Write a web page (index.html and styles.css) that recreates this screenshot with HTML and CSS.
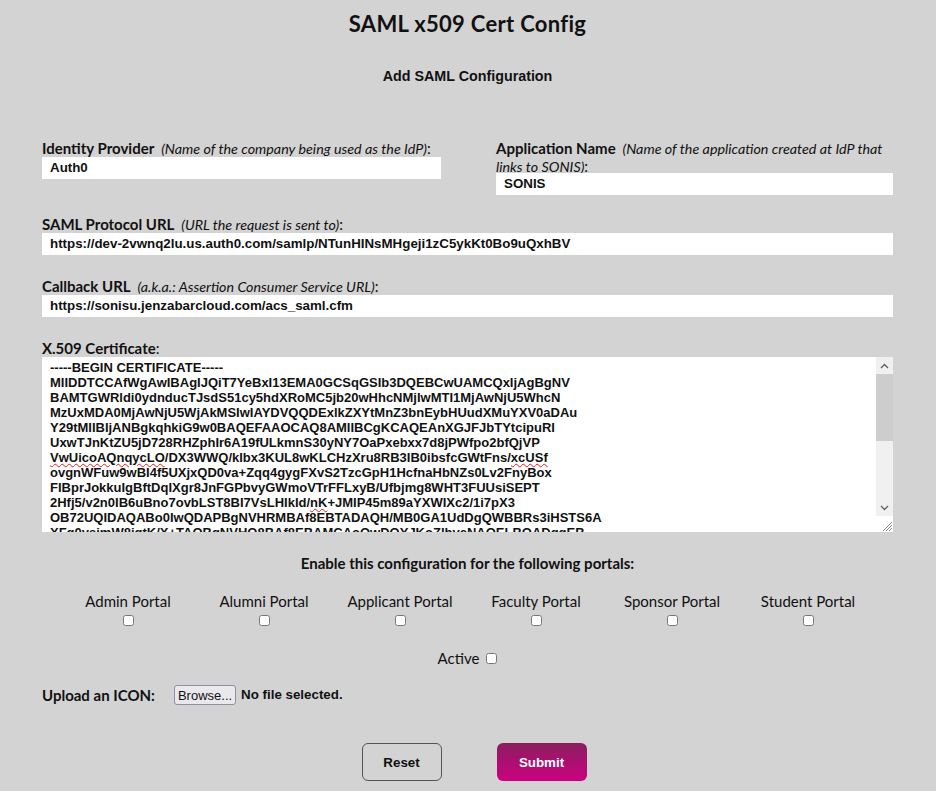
FILE: index.html
```html
<!DOCTYPE html>
<html>
<head>
<meta charset="utf-8">
<link rel="stylesheet" href="styles.css">
</head>
<body>
<div class="page">
  <h1 class="title">SAML x509 Cert Config</h1>
  <h2 class="subtitle">Add SAML Configuration</h2>

  <div class="row-two">
    <div class="field">
      <label class="lbl"><b>Identity Provider</b> <i>(Name of the company being used as the IdP)</i>:</label>
      <div class="input">Auth0</div>
    </div>
    <div class="field">
      <label class="lbl lbl-tight"><b>Application Name</b> <i>(Name of the application created at IdP that links to SONIS)</i>:</label>
      <div class="input">SONIS</div>
    </div>
  </div>

  <div class="field">
    <label class="lbl"><b>SAML Protocol URL</b> <i>(URL the request is sent to)</i>:</label>
    <div class="input">https://dev-2vwnq2lu.us.auth0.com/samlp/NTunHINsMHgeji1zC5ykKt0Bo9uQxhBV</div>
  </div>

  <div class="field">
    <label class="lbl"><b>Callback URL</b> <i>(a.k.a.: Assertion Consumer Service URL)</i>:</label>
    <div class="input">https://sonisu.jenzabarcloud.com/acs_saml.cfm</div>
  </div>

  <div class="field">
    <label class="lbl"><b>X.509 Certificate</b>:</label>
    <div class="textarea">
      <div class="ta-text">-----BEGIN CERTIFICATE-----
MIIDDTCCAfWgAwIBAgIJQiT7YeBxI13EMA0GCSqGSIb3DQEBCwUAMCQxIjAgBgNV
BAMTGWRldi0ydnducTJsdS51cy5hdXRoMC5jb20wHhcNMjIwMTI1MjAwNjU5WhcN
MzUxMDA0MjAwNjU5WjAkMSIwIAYDVQQDExlkZXYtMnZ3bnEybHUudXMuYXV0aDAu
Y29tMIIBIjANBgkqhkiG9w0BAQEFAAOCAQ8AMIIBCgKCAQEAnXGJFJbTYtcipuRI
UxwTJnKtZU5jD728RHZphIr6A19fULkmnS30yNY7OaPxebxx7d8jPWfpo2bfQjVP
<span class="sp">VwUicoAQnqycLO</span>/DX3WWQ/kIbx3KUL8wKLCHzXru8RB3IB0ibsfcGWtFns/<span class="sp">xcUSf</span>
ovgnWFuw9wBI4f5UXjxQD0va+Zqq4gygFXvS2TzcGpH1HcfnaHbNZs0Lv2FnyBox
FIBprJokkuIgBftDqIXgr8JnFGPbvyGWmoVTrFFLxyB/Ufbjmg8WHT3FUUsiSEPT
2Hfj5/v2n0IB6uBno7ovbLST8BI7VsLHIkId/<span class="sp">nK</span>+JMIP45m89aYXWIXc2/1i7pX3
OB72UQIDAQABo0IwQDAPBgNVHRMBAf8EBTADAQH/MB0GA1UdDgQWBBRs3iHSTS6A
XFq0ysimW8jqtK/X+TAOBgNVHQ8BAf8EBAMCAoQwDQYJKoZIhvcNAQELBQADggEB</div>
      <div class="scrollbar">
        <div class="sb-btn"><svg width="9" height="6" viewBox="0 0 9 6"><path d="M1 5 L4.5 1.5 L8 5" fill="none" stroke="#606060" stroke-width="1.3"/></svg></div>
        <div class="sb-thumb"></div>
        <div class="sb-track"></div>
        <div class="sb-btn"><svg width="9" height="6" viewBox="0 0 9 6"><path d="M1 1 L4.5 4.5 L8 1" fill="none" stroke="#606060" stroke-width="1.3"/></svg></div>
        <div class="sb-corner"><svg width="12" height="12" viewBox="0 0 12 12"><path d="M11 2 L2 11 M11 5 L5 11 M11 8 L8 11" stroke="#8a8a8a" stroke-width="1"/></svg></div>
      </div>
    </div>
  </div>

  <p class="enable">Enable this configuration for the following portals:</p>

  <div class="portals">
    <label class="portal"><span>Admin Portal</span><input type="checkbox"></label>
    <label class="portal"><span>Alumni Portal</span><input type="checkbox"></label>
    <label class="portal"><span>Applicant Portal</span><input type="checkbox"></label>
    <label class="portal"><span>Faculty Portal</span><input type="checkbox"></label>
    <label class="portal"><span>Sponsor Portal</span><input type="checkbox"></label>
    <label class="portal"><span>Student Portal</span><input type="checkbox"></label>
  </div>

  <div class="active"><span>Active</span><input type="checkbox"></div>

  <div class="upload">
    <span class="up-label">Upload an ICON:</span>
    <button class="browse" type="button">Browse...</button>
    <span class="nofile">No file selected.</span>
  </div>

  <div class="buttons">
    <button class="btn reset" type="button">Reset</button>
    <button class="btn submit" type="button">Submit</button>
  </div>
</div>
</body>
</html>
```

FILE: styles.css
```css
html, body {
  margin: 0;
  padding: 0;
  background: #d3d3d3;
}
body {
  font-family: "Lato", "Liberation Sans", sans-serif;
  color: #111;
}
.page {
  padding: 0 43px 0 42px;
}
.title {
  margin: 0;
  padding-top: 10px;
  height: 28px;
  line-height: 28px;
  text-align: center;
  font-size: 22px;
  font-weight: 700;
  letter-spacing: 0.3px;
}
.subtitle {
  margin: 0;
  padding-top: 28px;
  height: 20px;
  line-height: 20px;
  text-align: center;
  font-family: "Liberation Sans", Arial, sans-serif;
  font-size: 14.3px;
  font-weight: 700;
}
.row-two {
  display: grid;
  grid-template-columns: 399px 1fr;
  column-gap: 55px;
  margin-top: 53px;
  margin-bottom: 20px;
}
.field {
  display: flex;
  flex-direction: column;
  margin-bottom: 22px;
}
.row-two .field {
  margin-bottom: 0;
}
.lbl {
  font-size: 15px;
  line-height: 18px;
}
.lbl-tight {
  margin-bottom: -2px;
}
.lbl b {
  font-weight: 700;
}
.lbl i {
  font-style: italic;
  font-size: 14.3px;
  line-height: 1;
  margin-left: 3px;
}
.input {
  background: #fff;
  height: 22px;
  line-height: 22px;
  padding-left: 8px;
  font-family: "Liberation Sans", Arial, sans-serif;
  font-size: 13.33px;
  font-weight: 700;
  color: #111;
  white-space: nowrap;
  overflow: hidden;
}
.textarea {
  display: flex;
  background: #fff;
  height: 175px;
  overflow: hidden;
}
.ta-text {
  flex: 1;
  padding: 3px 0 0 8px;
  white-space: pre;
  font-family: "Liberation Sans", Arial, sans-serif;
  font-size: 13px;
  font-weight: 700;
  line-height: 15px;
  color: #111;
  overflow: hidden;
}
.sp {
  text-decoration: underline wavy #e02020;
  text-decoration-thickness: 1px;
  text-underline-offset: 1px;
}
.scrollbar {
  width: 17px;
  display: flex;
  flex-direction: column;
  background: #f0f0f0;
}
.sb-btn {
  height: 17px;
  display: flex;
  align-items: center;
  justify-content: center;
}
.sb-thumb {
  height: 67px;
  background: #cdcdcd;
}
.sb-track {
  flex: 1;
}
.sb-corner {
  height: 16px;
  background: #fff;
  display: flex;
  align-items: flex-end;
  justify-content: flex-end;
}
.enable {
  margin: 0;
  text-align: center;
  font-size: 15px;
  font-weight: 700;
  line-height: 18px;
}
.portals {
  display: grid;
  grid-template-columns: repeat(6, 136px);
  margin: 20px 0 0 18px;
}
.portal {
  display: flex;
  flex-direction: column;
  align-items: center;
  font-size: 15px;
  line-height: 18px;
}
.portal input, .active input {
  margin: 0;
  width: 11px;
  height: 11px;
}
.portal input {
  margin-top: 5px;
}
.active {
  display: flex;
  justify-content: center;
  align-items: center;
  gap: 7px;
  margin-top: 23px;
  font-size: 15px;
  line-height: 18px;
}
.upload {
  display: flex;
  align-items: center;
  margin-top: 18px;
  height: 20px;
  font-size: 15px;
  line-height: 20px;
}
.up-label {
  font-weight: 700;
}
.browse {
  margin: 0 0 0 19px;
  padding: 0 3px;
  height: 20px;
  font-family: "Liberation Sans", Arial, sans-serif;
  font-size: 13px;
  color: #111;
  background: #e9e9ed;
  border: 1px solid #8f8f9d;
  border-radius: 3px;
}
.nofile {
  margin-left: 5px;
  font-family: "Liberation Sans", Arial, sans-serif;
  font-size: 13.33px;
  font-weight: 700;
}
.buttons {
  display: flex;
  justify-content: center;
  gap: 55px;
  margin-top: 38px;
  padding-left: 13px;
}
.btn {
  height: 38px;
  border-radius: 6px;
  font-family: "Liberation Sans", Arial, sans-serif;
  font-size: 13.33px;
  font-weight: 700;
  cursor: pointer;
}
.reset {
  width: 80px;
  background: transparent;
  border: 1px solid #555;
  color: #111;
}
.submit {
  width: 90px;
  border: none;
  color: #fff;
  background: linear-gradient(to bottom, #8a1f60, #cc007f);
}
```
